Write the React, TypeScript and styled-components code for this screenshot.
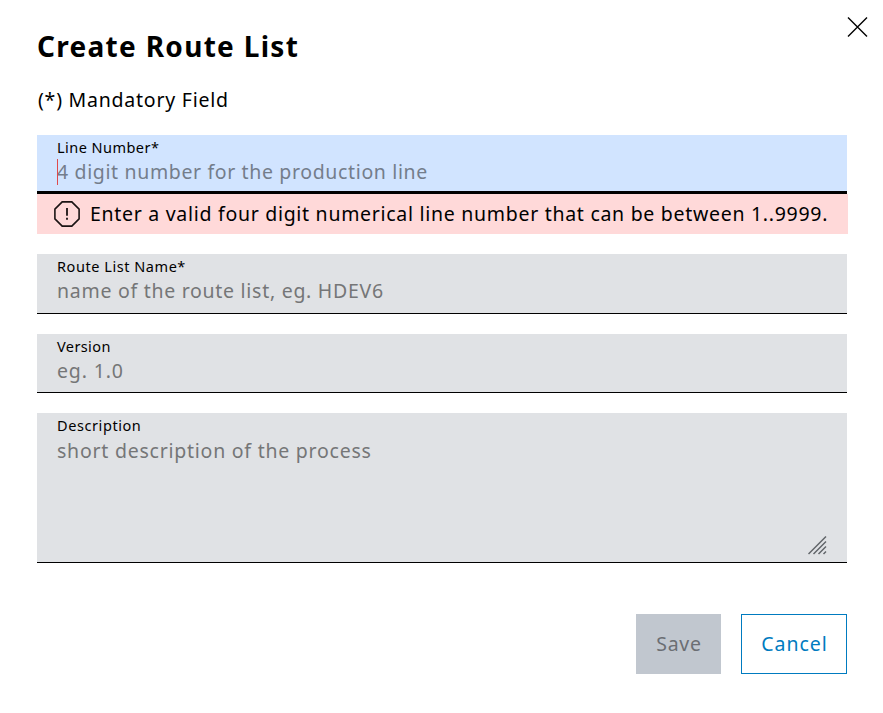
import React from "react";
import styled, { createGlobalStyle } from "styled-components";

const GlobalStyle = createGlobalStyle`
  *, *::before, *::after { box-sizing: border-box; }
  body {
    margin: 0;
    background: #fff;
    color: #000;
    font-family: "Noto Sans", "Open Sans", sans-serif;
    font-size: 19.5px;
  }
`;

const Dialog = styled.main`
  position: relative;
  width: 883px;
  height: 713px;
  padding: 26px 36px 0 37px;
  display: flex;
  flex-direction: column;
  background: #fff;
  white-space: nowrap;
`;

const CloseButton = styled.button`
  position: absolute;
  top: 16px;
  right: 15px;
  width: 21px;
  height: 21px;
  padding: 0;
  border: 0;
  background: none;
  svg { display: block; }
`;

const Title = styled.h1`
  margin: 0;
  height: 40px;
  line-height: 40px;
  font-size: 28px;
  font-weight: 700;
  letter-spacing: 1.3px;
`;

const Note = styled.p`
  margin: 20px 0 0;
  padding-left: 1px;
  height: 28px;
  line-height: 28px;
  letter-spacing: 0.77px;
`;

const Form = styled.form`
  display: flex;
  flex-direction: column;
  gap: 20px;
  margin-top: 21px;
  width: 810px;
`;

const Field = styled.label<{ $height: number; $active?: boolean }>`
  position: relative;
  display: flex;
  flex-direction: column;
  height: ${(p) => p.$height}px;
  padding: 3px 20px 0;
  background: ${(p) => (p.$active ? "#d1e4ff" : "#e0e2e5")};
  border-bottom: ${(p) => (p.$active ? 3 : 1)}px solid #000;
`;

const Label = styled.span<{ $spacing: number }>`
  height: 18px;
  line-height: 18px;
  font-size: 14.5px;
  letter-spacing: ${(p) => p.$spacing}px;
`;

const Placeholder = styled.span<{ $spacing: number; $active?: boolean; $top?: number }>`
  margin-top: ${(p) => p.$top ?? 1}px;
  height: 30px;
  line-height: 30px;
  color: ${(p) => (p.$active ? "#747d8b" : "#757677")};
  letter-spacing: ${(p) => p.$spacing}px;
`;

const Caret = styled.i`
  position: absolute;
  left: 20px;
  top: 24px;
  width: 1px;
  height: 26px;
  background: #df4a4c;
`;

const ResizeGrip = styled.svg`
  position: absolute;
  right: 20px;
  bottom: 7px;
`;

const ErrorMessage = styled.div`
  display: flex;
  align-items: center;
  width: 811px;
  height: 40px;
  padding-left: 16px;
  background: #ffd9d9;
`;

const ErrorText = styled.span`
  margin-left: 9px;
  padding-bottom: 2px;
  letter-spacing: 0.71px;
`;

const Actions = styled.footer`
  display: flex;
  justify-content: flex-end;
  gap: 20px;
  margin-top: 51px;
`;

const Button = styled.button<{ $width: number; $outlined?: boolean }>`
  width: ${(p) => p.$width}px;
  height: 60px;
  padding: 0 0 2px 1px;
  font: inherit;
  letter-spacing: ${(p) => (p.$outlined ? 0.95 : 0.7)}px;
  border: ${(p) => (p.$outlined ? "1px solid #007bc0" : "0")};
  background: ${(p) => (p.$outlined ? "#fff" : "#c1c7cf")};
  color: ${(p) => (p.$outlined ? "#007bc0" : "#6b6e73")};
`;

export default function App() {
  return (
    <>
      <GlobalStyle />
      <Dialog>
        <Title>Create Route List</Title>
        <CloseButton aria-label="Close">
          <svg width="21" height="21" viewBox="0 0 21 21" stroke="#000" strokeWidth="1.4">
            <path d="M1 1.5 20 20.5M20 1.5 1 20.5" />
          </svg>
        </CloseButton>
        <Note>(*) Mandatory Field</Note>
        <Form>
          <div>
            <Field $height={59} $active>
              <Label $spacing={0.46}>Line Number*</Label>
              <Placeholder $spacing={0.64} $active>4 digit number for the production line</Placeholder>
              <Caret />
            </Field>
            <ErrorMessage role="alert">
              <svg width="28" height="28" viewBox="0 0 28 28" fill="none" stroke="#1c1414" strokeWidth="1.6">
                <path d="M9.2 1.9H18.8L26.1 9.2V18.8L18.8 26.1H9.2L1.9 18.8V9.2Z" />
                <path d="M14 8V15.8M14 17.8V19.8" strokeWidth="1.8" />
              </svg>
              <ErrorText>Enter a valid four digit numerical line number that can be between 1..9999.</ErrorText>
            </ErrorMessage>
          </div>
          <Field $height={60}>
            <Label $spacing={0.55}>Route List Name*</Label>
            <Placeholder $spacing={0.72}>name of the route list, eg. HDEV6</Placeholder>
          </Field>
          <Field $height={59}>
            <Label $spacing={0.4}>Version</Label>
            <Placeholder $spacing={0.85}>eg. 1.0</Placeholder>
          </Field>
          <Field $height={150}>
            <Label $spacing={0.58}>Description</Label>
            <Placeholder $spacing={0.76} $top={2}>short description of the process</Placeholder>
            <ResizeGrip width="19" height="19" viewBox="0 0 19 19" stroke="#62666a" strokeWidth="1.5">
              <path d="M.5 18 18 .5M5.5 18 18 5.5M10.5 18 18 10.5M15.5 18 18 15.5" />
            </ResizeGrip>
          </Field>
        </Form>
        <Actions>
          <Button $width={85} disabled>Save</Button>
          <Button $width={106} $outlined>Cancel</Button>
        </Actions>
      </Dialog>
    </>
  );
}
